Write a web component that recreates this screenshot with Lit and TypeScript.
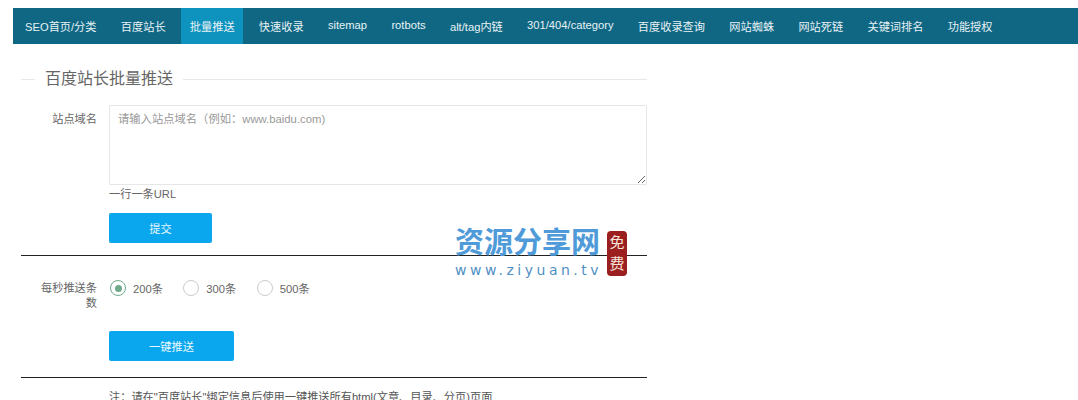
import { LitElement, html, css } from "lit";
import { customElement } from "lit/decorators.js";

const NAV = ["SEO首页/分类","百度站长","批量推送","快速收录","sitemap","rotbots","alt/tag内链","301/404/category","百度收录查询","网站蜘蛛","网站死链","关键词排名","功能授权"];

const navClass = (n: string) =>
  n === "批量推送" ? "active" : n === "301/404/category" || n === "sitemap" || n === "rotbots" ? "latin" : "";

@customElement("app-root")
export class AppRoot extends LitElement {
  static styles = css`
    :host { display:block; position:relative; height:400px; overflow:hidden; background:#fff; color:#666;
      font-family:"Liberation Sans","Noto Sans CJK SC",sans-serif; font-size:11.2px; text-spacing-trim:space-all; }
    nav { display:flex; margin:8px 0 0 13px; height:36px; background:#0f6784; }
    nav a { display:flex; align-items:center; padding:0 12.17px; color:#e8f2f5; font-size:11.2px; white-space:nowrap; }
    nav a:first-child { padding-left:12px; }
    nav a.latin { padding-bottom:3px; box-sizing:border-box; }
    nav a.active { background:#0e93bf; padding:0 8.7px; margin:0 3.4px; }
    main { width:626px; margin-left:21px; }
    .title { display:flex; align-items:center; gap:10px; height:20px; margin-top:25px; color:#666; font-size:16px; line-height:20px; }
    .title::before { content:""; width:14px; height:1px; background:#e8e8e8; }
    .title::after { content:""; flex:1; height:1px; background:#e8e8e8; }
    .row { display:flex; }
    .label { box-sizing:border-box; width:76px; padding-left:19px; flex:none; text-align:right; line-height:15px; color:#666; }
    .field { margin-left:12px; flex:1; min-width:0; }
    textarea { display:block; box-sizing:border-box; width:100%; height:80px; margin:0; padding:6px 8px; border:1px solid #e6e6e6; border-radius:1px;
      font:inherit; font-size:11.3px; line-height:15px; outline:none; background:#fff; }
    textarea::placeholder { color:#999; }
    .help { margin-top:1px; line-height:16px; color:#666; }
    button { display:block; height:30px; border:0; border-radius:2px; background:#0aa7ee; color:#e8f8ff; font:inherit; padding:0; }
    .submit { width:103px; margin-top:11px; }
    .push { width:125px; margin-top:34px; }
    hr { margin:0; border:0; height:1px; background:#222; }
    .radios { display:flex; align-items:center; height:18px; }
    .radio { display:flex; align-items:center; gap:7px; color:#666; }
    .radio + .radio { margin-left:19.5px; }
    .dot { box-sizing:border-box; width:16px; height:16px; border:1.5px solid #ccc; border-radius:50%; display:flex; align-items:center; justify-content:center; margin-left:1px; }
    .dot.on { border-color:#6fa98a; }
    .dot.on::after { content:""; width:7px; height:7px; border-radius:50%; background:#6fa98a; }
    .note { margin:12px 0 0 88px; white-space:nowrap; color:#555; line-height:15px; }
    .mark { position:absolute; left:455px; top:222px; width:172px; height:56px; }
    .mark .cn { position:absolute; left:0; top:0; font-size:29px; line-height:36px; font-weight:700; color:#4f9ad8; white-space:nowrap; font-family:"Noto Sans CJK SC",sans-serif; }
    .mark .en { position:absolute; left:0; top:40px; font-size:14px; line-height:16px; letter-spacing:3.5px; color:#4f8fc4; white-space:nowrap; font-family:"DejaVu Sans",sans-serif; }
    .mark .seal { position:absolute; left:152px; top:9px; width:20px; height:45px; border-radius:4px; background:#9c1f1f; color:#f7e6dc; font-size:15px; line-height:21px; text-align:center; font-family:"Noto Sans CJK SC",sans-serif; }
  `;

  render() {
    return html`
      <nav>${NAV.map(n => html`<a class="${navClass(n)}">${n}</a>`)}</nav>
      <main>
        <div class="title">百度站长批量推送</div>
        <div class="row" style="margin-top:16px">
          <div class="label" style="padding-top:7px">站点域名</div>
          <div class="field">
            <textarea placeholder="请输入站点域名（例如：www.baidu.com)"></textarea>
            <div class="help">一行一条URL</div>
            <button class="submit">提交</button>
          </div>
        </div>
        <hr style="margin-top:12px">
        <div class="row" style="margin-top:23px">
          <div class="label" style="padding-top:2px">每秒推送条数</div>
          <div class="field">
            <div class="radios">
              <label class="radio"><span class="dot on"></span>200条</label>
              <label class="radio"><span class="dot"></span>300条</label>
              <label class="radio"><span class="dot"></span>500条</label>
            </div>
            <button class="push">一键推送</button>
          </div>
        </div>
        <hr style="margin-top:16px">
        <div class="note">注：请在"百度站长"绑定信息后使用一键推送所有html(文章、目录、分页)页面</div>
      </main>
      <div class="mark">
        <div class="cn">资源分享网</div>
        <div class="en">www.ziyuan.tv</div>
        <div class="seal">免<br>费</div>
      </div>
    `;
  }
}
